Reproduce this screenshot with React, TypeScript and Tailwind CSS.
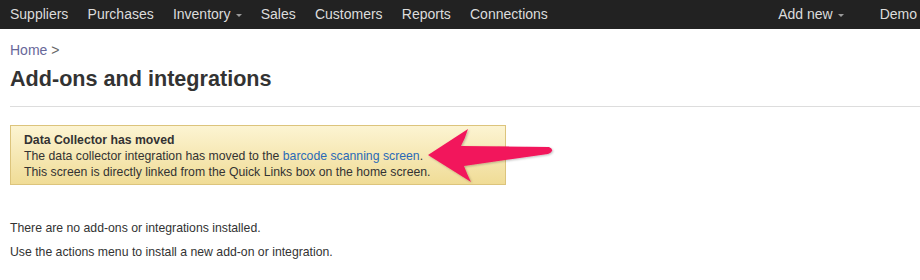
import React from 'react';

const navLeft = ['Suppliers', 'Purchases', 'Inventory', 'Sales', 'Customers', 'Reports', 'Connections'];

function Caret() {
  return <span className="ml-[5px] inline-block h-0 w-0 border-x-[3px] border-t-[3px] border-x-transparent border-t-[#9a9a9a] align-middle" />;
}

function Arrow() {
  return (
    <svg className="pointer-events-none absolute left-[420px] top-[124px]" width="140" height="64" viewBox="420 124 140 64">
      <defs>
        <filter id="sh" x="-10%" y="-20%" width="120%" height="140%">
          <feDropShadow dx="1" dy="1" stdDeviation="1.2" floodColor="#000" floodOpacity="0.25" />
        </filter>
      </defs>
      <path
        d="M428 155 L468 129 Q465 139 461 146 L549 147 Q553 149 552 151 Q551 153 548 154 L464 166 Q467 174 471 182 Z"
        fill="#f2185b"
        filter="url(#sh)"
      />
    </svg>
  );
}

export default function App() {
  return (
    <div className="relative min-h-[280px] w-[920px] overflow-hidden bg-white font-['Liberation_Sans',Arial,sans-serif] text-[#333]">
      <nav className="flex h-[29px] items-center bg-[#222] text-[14px] text-[#dcdcdc]">
        <div className="flex gap-[19.2px] pl-[10px]">
          {navLeft.map((item) => (
            <span key={item} className="whitespace-nowrap">
              {item}
              {item === 'Inventory' && <Caret />}
            </span>
          ))}
        </div>
        <div className="ml-auto mr-[-8px] flex shrink-0 gap-[36px] whitespace-nowrap">
          <span>
            Add new
            <Caret />
          </span>
          <span>
            Demo
            <Caret />
          </span>
        </div>
      </nav>

      <div className="pl-[10px]">
        <div className="pt-[11px] text-[14px] leading-[20px]">
          <span className="text-[#68689a]">Home</span> <span className="text-[#666]">&gt;</span>
        </div>
        <h1 className="mt-[4px] text-[21.6px] font-bold leading-[29px] text-[#333]">Add-ons and integrations</h1>
        <div className="mt-[13px] border-t border-[#ddd]" />

        <div className="mt-[18px] w-[496px] border border-[#dcc47c] bg-gradient-to-b from-[#fcf4d2] to-[#f0dc96] px-[13px] pb-[4px] pt-[6px] text-[12.25px] leading-[16px] text-[#333]">
          <div className="font-bold">Data Collector has moved</div>
          <div>
            The data collector integration has moved to the{' '}
            <a className="text-[#2a6ab8]">barcode scanning screen</a>.
          </div>
          <div>This screen is directly linked from the Quick Links box on the home screen.</div>
        </div>

        <p className="mt-[34px] text-[12.25px] leading-[18px] text-[#333]">There are no add-ons or integrations installed.</p>
        <p className="mt-[6px] text-[12.25px] leading-[18px] text-[#333]">Use the actions menu to install a new add-on or integration.</p>
      </div>

      <Arrow />
    </div>
  );
}
